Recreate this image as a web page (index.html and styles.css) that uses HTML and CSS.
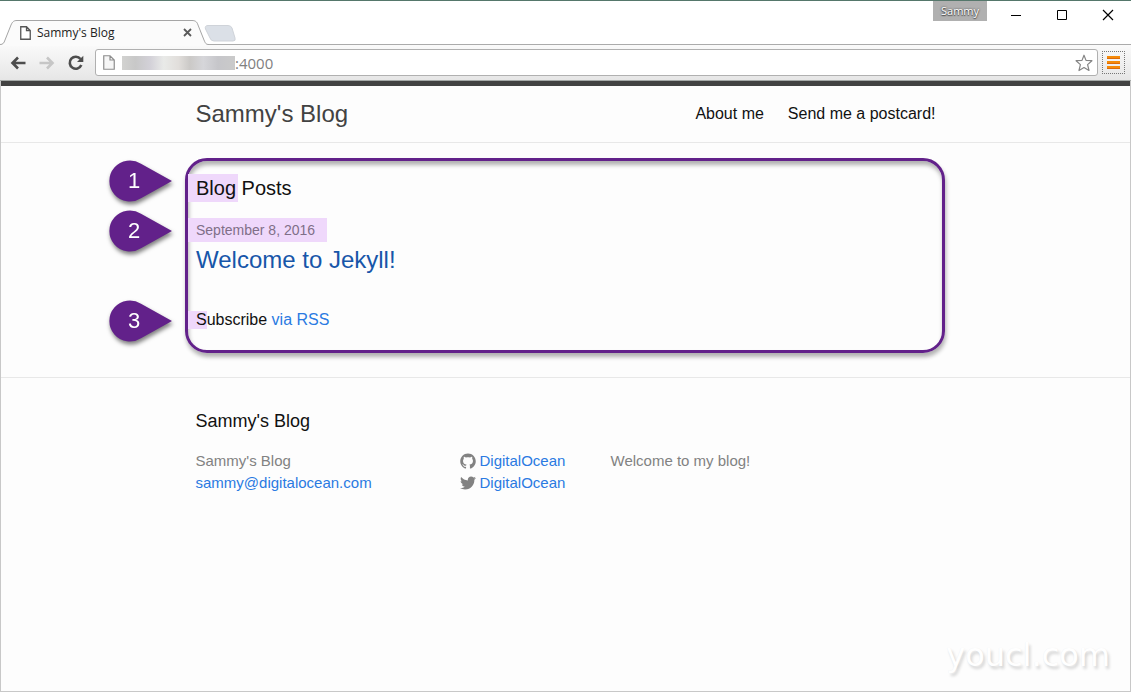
FILE: index.html
```html
<!DOCTYPE html>
<html lang="en">
<head>
<meta charset="utf-8">
<title>Sammy's Blog</title>
<link rel="stylesheet" href="styles.css">
</head>
<body>
<div class="window">
  <div class="titlebar">
    <div class="tabs">
      <div class="tab">
        <svg class="tab-shape" width="209" height="26" viewBox="0 0 209 26" aria-hidden="true"><path d="M0 24.5C3 24.5 4 23 5 20L11 5C12.500 1.500 14 .5 17 .5H192C195 .5 197 1.500 198 5L204 20C205.500 23.500 206 24.500 209 24.500V26H0Z" fill="#fbfbfb"/><path d="M0 24.500C3 24.500 4 23 5 20L11 5C12.500 1.500 14 .5 17 .5H192C195 .5 197 1.500 198 5L204 20C205.500 23.500 206 24.500 209 24.500" fill="none" stroke="#a5a5a5"/></svg>
        <svg class="tab-icon" width="11" height="14" viewBox="0 0 11 14" aria-hidden="true"><path d="M.75 .75H6.500L10.250 4.500V13.250H.75ZM6.500 .75V4.500H10.250" fill="#fff" stroke="#555" stroke-width="1.300"/></svg>
        <span class="tab-title">Sammy's Blog</span>
        <button class="bare tab-close" aria-label="Close tab"><svg width="9" height="9" viewBox="0 0 9 9"><path d="M1 1L8 8M8 1L1 8" stroke="#5a5a5a" stroke-width="1.800"/></svg></button>
      </div>
      <button class="bare new-tab" aria-label="New tab"><svg width="32" height="17" viewBox="0 0 32 17"><path d="M4 .5H24Q27 .5 28 3L31 13Q32 16 29 16H10Q7 16 6 13L1.500 4Q.5 .5 4 .5Z" fill="#dbe0e7" stroke="#cfd3d9"/></svg></button>
    </div>
    <div class="controls">
      <button class="bare profile">Sammy</button>
      <button class="bare control" aria-label="Minimize"><svg width="12" height="12" viewBox="0 0 12 12"><path d="M1 6.500H11" stroke="#000"/></svg></button>
      <button class="bare control" aria-label="Maximize"><svg width="12" height="12" viewBox="0 0 12 12"><path d="M1.500 1.500H10.500V10.500H1.500Z" fill="none" stroke="#000"/></svg></button>
      <button class="bare control" aria-label="Close"><svg width="12" height="12" viewBox="0 0 12 12"><path d="M1 1L11 11M11 1L1 11" stroke="#000" stroke-width="1.200"/></svg></button>
    </div>
  </div>

  <div class="toolbar">
    <button class="bare tool" aria-label="Back"><svg width="16" height="14" viewBox="0 0 16 14"><path d="M15.500 7H3M8 1.500L2.500 7L8 12.500" fill="none" stroke="#4d4d4d" stroke-width="2.600"/></svg></button>
    <button class="bare tool" aria-label="Forward"><svg width="16" height="14" viewBox="0 0 16 14"><path d="M.5 7H13M8 1.500L13.500 7L8 12.500" fill="none" stroke="#c6c6c6" stroke-width="2.600"/></svg></button>
    <button class="bare tool" aria-label="Reload"><svg width="16" height="16" viewBox="0 0 16 16"><path d="M12.500 4A6 6 0 1 0 13.300 10" fill="none" stroke="#4d4d4d" stroke-width="2.600"/><path d="M15.300 .8V7H9Z" fill="#4d4d4d"/></svg></button>
    <div class="omnibox">
      <svg width="12" height="15" viewBox="0 0 12 15" aria-hidden="true"><path d="M.75 .75H7L11.250 5V14.250H.75ZM7 .75V5H11.250" fill="#f6f6f6" stroke="#8d8d8d" stroke-width="1.200"/></svg>
      <span class="redacted"></span>
      <input class="address" type="text" value=":4000" aria-label="Address">
      <button class="bare star" aria-label="Bookmark"><svg width="18" height="18" viewBox="0 0 18 18"><path d="M9 1.200L11 6.400L16.900 6.700L12.600 10.600L14 16.500L9 13.500L4 16.500L5.400 10.600L1.100 6.700L7 6.400Z" fill="#fff" stroke="#858585" stroke-width="1.200" stroke-linejoin="round"/></svg></button>
    </div>
    <button class="bare menu" aria-label="Menu"><svg width="13" height="13" viewBox="0 0 13 13"><path d="M0 1.500H13M0 6.500H13M0 11.500H13" stroke="#f58a07" stroke-width="3"/><path d="M0 2.500H13M0 7.500H13M0 12.500H13" stroke="#dc6a08"/></svg></button>
  </div>

  <div class="page">
    <header class="site-header">
      <div class="wrapper header-row">
        <a class="site-title" href="#">Sammy's Blog</a>
        <nav class="site-nav"><a href="#">About me</a><a href="#">Send me a postcard!</a></nav>
      </div>
    </header>

    <main class="content">
      <section class="outline">
        <div class="row row-heading">
          <div class="callout"><svg width="64" height="44" viewBox="0 0 64 44" aria-hidden="true"><path d="M63 21L32 3.800A20.500 20.500 0 1 0 32 38.200Z" fill="#62218a"/></svg><span>1</span></div>
          <h1><span class="mark mark-word">Blog</span> Posts</h1>
        </div>
        <div class="row row-date">
          <div class="callout"><svg width="64" height="44" viewBox="0 0 64 44" aria-hidden="true"><path d="M63 21L32 3.800A20.500 20.500 0 1 0 32 38.200Z" fill="#62218a"/></svg><span>2</span></div>
          <span class="mark mark-date">September 8, 2016</span>
        </div>
        <h2><a href="#">Welcome to Jekyll!</a></h2>
        <div class="row row-subscribe">
          <div class="callout"><svg width="64" height="44" viewBox="0 0 64 44" aria-hidden="true"><path d="M63 21L32 3.800A20.500 20.500 0 1 0 32 38.200Z" fill="#62218a"/></svg><span>3</span></div>
          <p><span class="mark mark-letter">S</span>ubscribe <a href="#">via RSS</a></p>
        </div>
      </section>
    </main>

    <footer class="site-footer">
      <div class="wrapper">
        <h2 class="footer-heading">Sammy's Blog</h2>
        <div class="footer-columns">
          <div>Sammy's Blog<br><a href="mailto:sammy@digitalocean.com">sammy@digitalocean.com</a></div>
          <div>
            <a class="social" href="#"><svg width="16" height="16" viewBox="0 0 16 16" aria-hidden="true"><path fill="#828282" d="M7.999,0.431c-4.285,0-7.760,3.474-7.760,7.761 c0,3.428,2.223,6.337,5.307,7.363c0.388,0.071,0.530-0.168,0.530-0.374c0-0.184-0.007-0.672-0.010-1.320 c-2.159,0.469-2.614-1.040-2.614-1.040c-0.353-0.896-0.862-1.135-0.862-1.135c-0.705-0.481,0.053-0.472,0.053-0.472 c0.779,0.055,1.189,0.800,1.189,0.800c0.692,1.186,1.816,0.843,2.258,0.645c0.071-0.502,0.271-0.843,0.493-1.037 C4.860,11.425,3.049,10.760,3.049,7.786c0-0.847,0.302-1.540,0.799-2.082C3.768,5.507,3.501,4.718,3.924,3.650 c0,0,0.652-0.209,2.134,0.796C6.677,4.273,7.340,4.187,8,4.184c0.659,0.003,1.323,0.089,1.943,0.261 c1.482-1.004,2.132-0.796,2.132-0.796c0.423,1.068,0.157,1.857,0.077,2.054c0.497,0.542,0.798,1.235,0.798,2.082 c0,2.981-1.814,3.637-3.543,3.829c0.279,0.240,0.527,0.713,0.527,1.437c0,1.037-0.010,1.874-0.010,2.129 c0,0.208,0.140,0.449,0.534,0.373c3.081-1.028,5.302-3.935,5.302-7.362C15.760,3.906,12.285,0.431,7.999,0.431z"/></svg>DigitalOcean</a>
            <a class="social" href="#"><svg width="16" height="16" viewBox="0 0 16 16" aria-hidden="true"><path fill="#828282" d="M15.969,3.058c-0.586,0.260-1.217,0.436-1.878,0.515c0.675-0.405,1.194-1.045,1.438-1.809c-0.632,0.375-1.332,0.647-2.076,0.793c-0.596-0.636-1.446-1.033-2.387-1.033c-1.806,0-3.270,1.464-3.270,3.270 c0,0.256,0.029,0.506,0.085,0.745C5.163,5.404,2.753,4.102,1.140,2.124C0.859,2.607,0.698,3.168,0.698,3.767 c0,1.134,0.577,2.135,1.455,2.722C1.616,6.472,1.112,6.325,0.671,6.080c0,0.014,0,0.027,0,0.041c0,1.584,1.127,2.906,2.623,3.206 C3.020,9.402,2.731,9.442,2.433,9.442c-0.211,0-0.416-0.021-0.615-0.059c0.416,1.299,1.624,2.245,3.055,2.271 c-1.119,0.877-2.529,1.400-4.061,1.400c-0.264,0-0.524-0.015-0.780-0.046c1.447,0.928,3.166,1.469,5.013,1.469 c6.015,0,9.304-4.983,9.304-9.304c0-0.142-0.003-0.283-0.009-0.423C14.976,4.290,15.531,3.714,15.969,3.058z"/></svg>DigitalOcean</a>
          </div>
          <div>Welcome to my blog!</div>
        </div>
      </div>
    </footer>
    <div class="watermark">youcl.com</div>
  </div>
</div>
</body>
</html>
```
FILE: styles.css
```css
* { box-sizing: border-box; }
body { margin: 0; font: 16px/24px "Liberation Sans", Arial, sans-serif; color: #111; }
h1, h2, p { margin: 0; font-weight: 400; }
a { color: #2a7ae2; text-decoration: none; }
svg { display: block; flex: none; }
.bare { display: flex; align-items: center; justify-content: center; margin: 0; padding: 0; border: 0; background: none; flex: none; }

.window { min-height: 100vh; display: flex; flex-direction: column; border-top: 1px solid #55776b; background: #fff; }

/* Title bar and tabs */
.titlebar { display: flex; justify-content: space-between; height: 44px; border-bottom: 1px solid #ababab; }
.tabs { display: flex; align-items: flex-end; }
.tab { position: relative; display: flex; align-items: center; width: 204px; height: 25px; margin-bottom: -1px; padding: 0 12px 0 20px; font: 12px/16px "Open Sans", "Noto Sans", sans-serif; color: #222; }
.tab-shape { position: absolute; left: 0; top: 0; }
.tab-icon, .tab-title, .tab-close { position: relative; }
.tab-title { margin-left: 6px; flex: 1; }
.tab-close { width: 9px; height: 16px; }
.new-tab { margin-bottom: 2px; }
.controls { display: flex; align-items: flex-start; }
.profile { width: 54px; height: 20px; margin-right: 6px; background: #b0b0b0; color: #fff; font: 11px/16px "Open Sans", "Noto Sans", sans-serif; text-shadow: 0 0 2px #333, 0 1px 1px #555; }
.control { width: 46px; height: 28px; }

/* Toolbar */
.toolbar { display: flex; align-items: center; height: 36px; padding: 0 6px 0 3px; background: linear-gradient(#fafafa, #e6e6e6); border-bottom: 1px solid #a5a9a7; }
.tool { width: 29px; height: 28px; }
.omnibox { display: flex; align-items: center; flex: 1; min-width: 0; height: 27px; margin: 0 4px 0 5px; padding: 0 4px 0 7px; background: #fff; border: 1px solid #b0b0b0; border-radius: 3px; }
.redacted { width: 113px; height: 14px; margin-left: 7px; flex: none; background: linear-gradient(90deg, #d2d2d0, #c8c8c8 12%, #d3d1d8 25%, #e9eae8 37%, #e1dedb 50%, #cbc9c7 60%, #d6d6da 72%, #c6c6ca 85%, #cacaca); }
.address { flex: 1; min-width: 0; padding: 0; border: 0; outline: 0; background: none; color: #808080; font: 15px/20px "Open Sans", "Noto Sans", sans-serif; }
.star { width: 18px; height: 20px; }
.menu { width: 23px; height: 23px; border: 1px dotted #777; }

/* Page */
.page { position: relative; flex: 1; border: 1px solid #c8c8c8; border-top: 0; background: #fdfdfd; }
.wrapper { max-width: 800px; margin: 0 auto; padding: 0 30px; }
.site-header { border-top: 5px solid #424242; border-bottom: 1px solid #e8e8e8; }
.header-row { display: flex; align-items: center; justify-content: space-between; height: 56px; }
.site-title { color: #424242; font-size: 24px; }
.site-nav { display: flex; gap: 24px; }
.site-nav a { color: #111; }
.content { padding: 15px 25px 24px 24px; }
.outline { max-width: 760px; margin: 0 auto; padding: 12px 8px 18px; border: 3px solid #62218a; border-radius: 22px; box-shadow: 1px 4px 4px rgba(0, 0, 0, .3), inset 1px 4px 4px rgba(0, 0, 0, .3); }
.outline h1 { font-size: 20px; line-height: 30px; }
.outline h2 { font-size: 24px; line-height: 36px; }
.outline h2 a { color: #1756a9; }
.row { position: relative; }
.row-date { margin-top: 15px; color: #828282; font-size: 14px; line-height: 24px; }
.row-subscribe { margin-top: 30px; }
.mark { display: inline-block; margin-left: -8px; padding-left: 8px; background: #efd8fb; }
.mark-word { line-height: 28px; padding-right: 2px; margin-right: -2px; }
.mark-date { padding-right: 12px; color: #7f6f88; }
.mark-letter { line-height: 18px; }

/* Numbered markers beside the outline */
.callout { position: absolute; right: 100%; top: 50%; width: 64px; height: 44px; margin: -20px 23px 0 0; color: #fff; font-size: 22px; line-height: 42px; filter: drop-shadow(1px 3px 2px rgba(0, 0, 0, .5)); }
.callout span { position: absolute; left: 0; top: 0; width: 50px; text-align: center; }
.row-heading .callout { top: 7px; }

/* Footer */
.site-footer { padding: 30px 0; border-top: 1px solid #e8e8e8; }
.footer-heading { margin-bottom: 15px; font-size: 18px; line-height: 27px; }
.footer-columns { display: grid; grid-template-columns: 264fr 151fr 325fr; color: #828282; font-size: 15px; line-height: 22px; }
.social { display: flex; align-items: center; gap: 4px; }
.watermark { position: absolute; right: 20px; bottom: 18px; color: #fff; font: 32px/36px "DejaVu Sans", sans-serif; text-shadow: 2px 3px 3px #d4d4d4, 0 0 1px #eee; }
```
